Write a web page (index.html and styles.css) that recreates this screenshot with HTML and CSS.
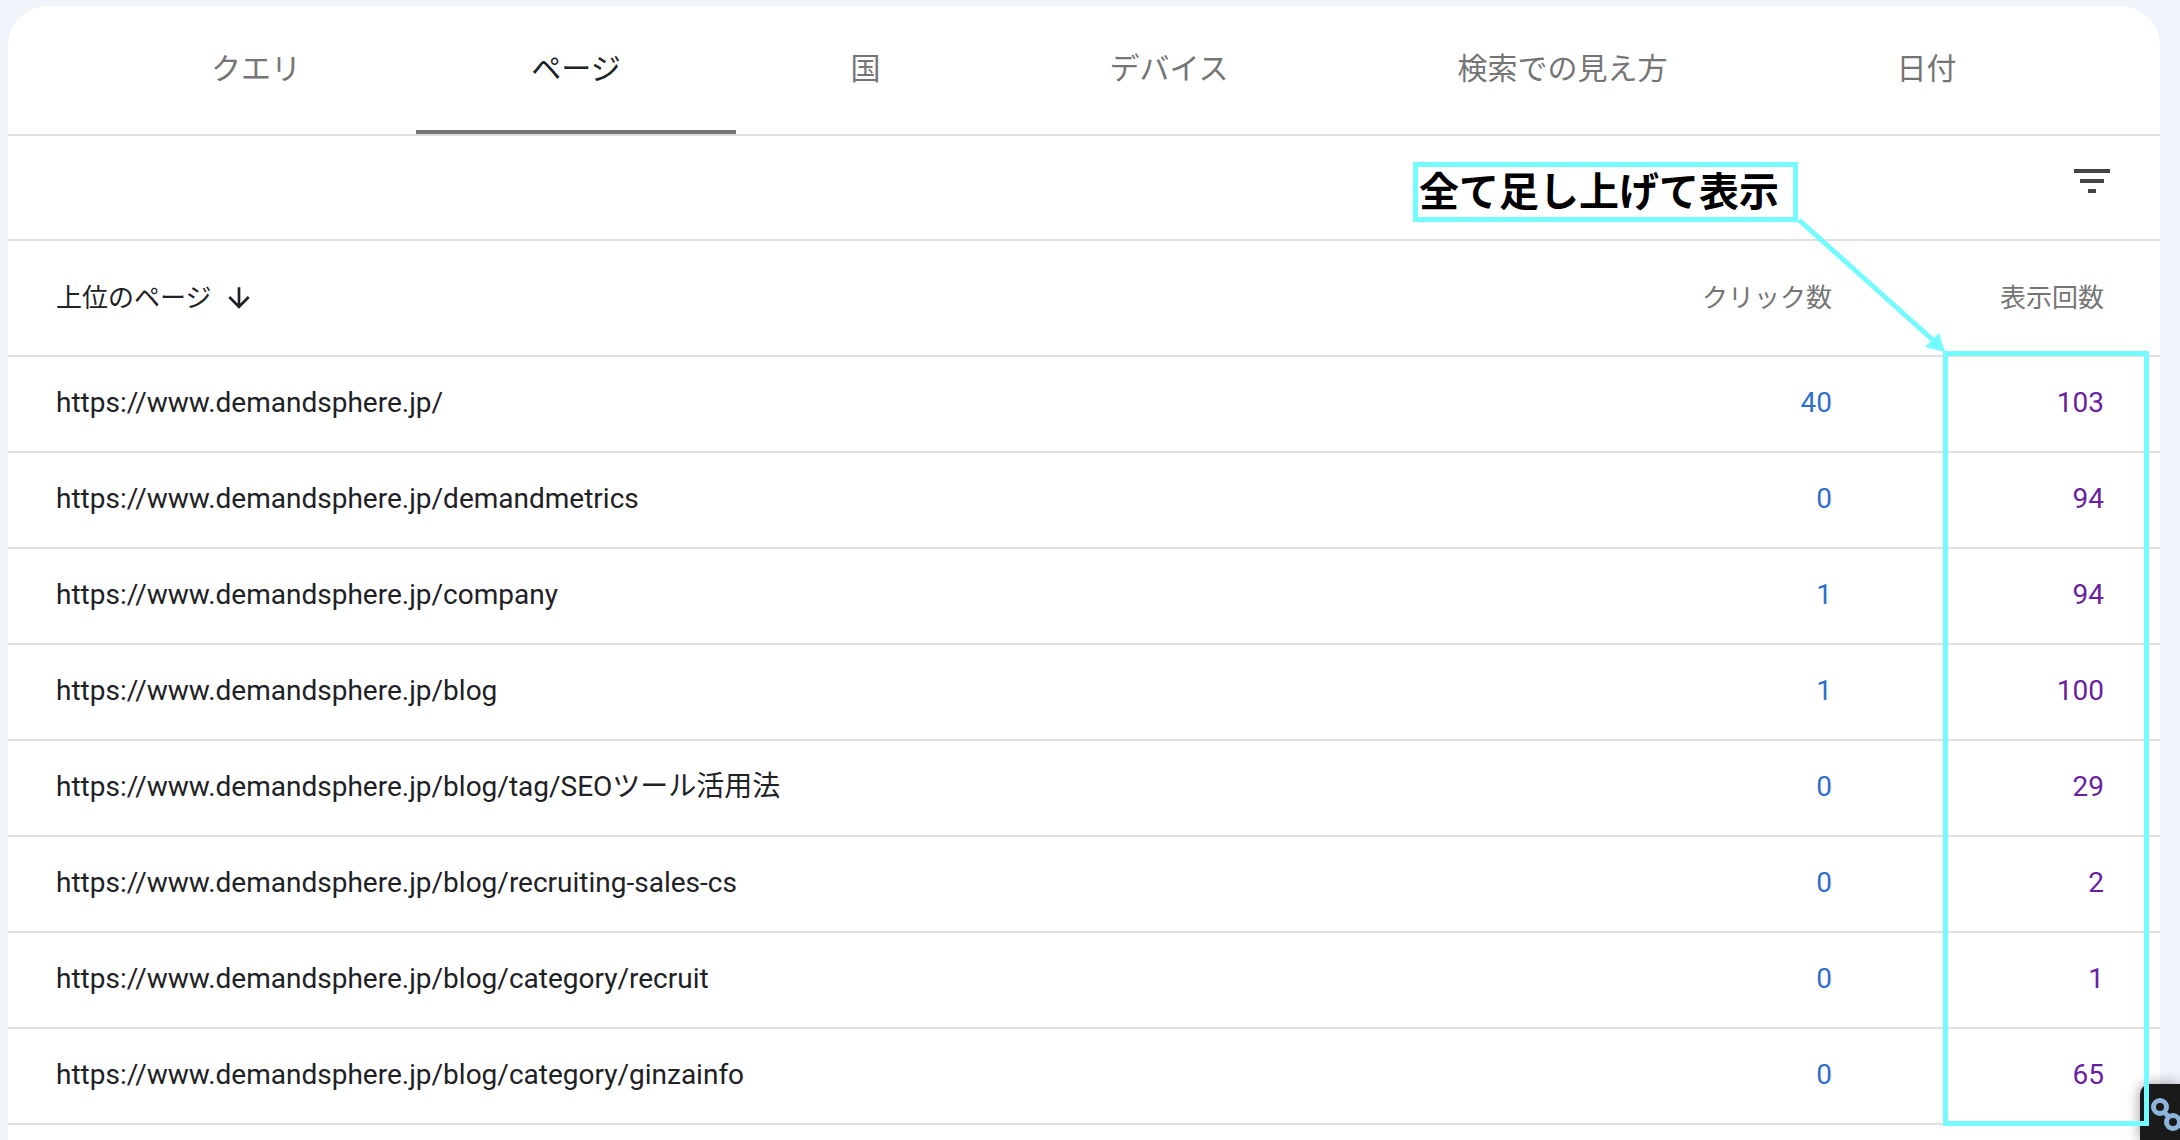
FILE: index.html
```html
<!DOCTYPE html>
<html lang="ja">
<head>
    <meta charset="UTF-8">
    <title>検索パフォーマンス</title>
    <link rel="stylesheet" href="styles.css">
</head>
<body>

<div class="card">
    <!-- Tabs -->
    <div class="tabs">
        <div class="tab tab-fixed">クエリ</div>
        <div class="tab tab-fixed active">ページ</div>
        <div class="tab">国</div>
        <div class="tab">デバイス</div>
        <div class="tab">検索での見え方</div>
        <div class="tab">日付</div>
    </div>

    <!-- Filter toolbar -->
    <div class="toolbar">
        <svg class="filter-icon" viewBox="0 0 24 24"><path d="M10 18h4v-2h-4v2zM3 6v2h18V6H3zm3 7h12v-2H6v2z"/></svg>
    </div>

    <!-- Table -->
    <div class="row head">
        <div class="cell-name">上位のページ
            <svg class="sort-icon" viewBox="0 0 24 24"><path d="M20 12l-1.41-1.41L13 16.17V4h-2v12.17l-5.58-5.59L4 12l8 8 8-8z"/></svg>
        </div>
        <div class="cell-num">クリック数</div>
        <div class="cell-num">表示回数</div>
    </div>
    <div class="row">
        <div class="cell-name">https://www.demandsphere.jp/</div>
        <div class="cell-num clicks">40</div>
        <div class="cell-num views">103</div>
    </div>
    <div class="row">
        <div class="cell-name">https://www.demandsphere.jp/demandmetrics</div>
        <div class="cell-num clicks">0</div>
        <div class="cell-num views">94</div>
    </div>
    <div class="row">
        <div class="cell-name">https://www.demandsphere.jp/company</div>
        <div class="cell-num clicks">1</div>
        <div class="cell-num views">94</div>
    </div>
    <div class="row">
        <div class="cell-name">https://www.demandsphere.jp/blog</div>
        <div class="cell-num clicks">1</div>
        <div class="cell-num views">100</div>
    </div>
    <div class="row">
        <div class="cell-name">https://www.demandsphere.jp/blog/tag/SEOツール活用法</div>
        <div class="cell-num clicks">0</div>
        <div class="cell-num views">29</div>
    </div>
    <div class="row">
        <div class="cell-name">https://www.demandsphere.jp/blog/recruiting-sales-cs</div>
        <div class="cell-num clicks">0</div>
        <div class="cell-num views">2</div>
    </div>
    <div class="row">
        <div class="cell-name">https://www.demandsphere.jp/blog/category/recruit</div>
        <div class="cell-num clicks">0</div>
        <div class="cell-num views">1</div>
    </div>
    <div class="row">
        <div class="cell-name">https://www.demandsphere.jp/blog/category/ginzainfo</div>
        <div class="cell-num clicks">0</div>
        <div class="cell-num views">65</div>
    </div>
</div>

<!-- Floating widget, bottom right -->
<div class="widget">
    <svg class="chain-icon" viewBox="0 0 40 56">
        <g fill="none" stroke="#8fb4da" stroke-width="5">
            <circle cx="20" cy="23" r="6.5"/>
            <circle cx="33" cy="38" r="6.5"/>
            <path d="M24 28l5 5"/>
        </g>
    </svg>
</div>

<!-- Annotation drawn over the screenshot -->
<div class="callout">全て足し上げて表示</div>
<div class="highlight"></div>
<svg class="arrow" viewBox="0 0 2180 1140">
    <line x1="1799" y1="220" x2="1934" y2="341" stroke="#73fbff" stroke-width="5"/>
    <polygon points="1945,352 1939,333 1925,347" fill="#73fbff"/>
</svg>

</body>
</html>
```

FILE: styles.css
```css
/* Global Styles */
body {
    margin: 0;
    height: 1140px;
    overflow: hidden;
    background-color: #f1f5fb;
    font-family: Roboto, "Noto Sans CJK JP", sans-serif;
    color: #202124;
}
.card {
    margin: 6px 20px 0 8px;
    height: 1134px;
    background-color: #fff;
    border-radius: 40px 40px 0 0;
}
/* Tabs */
.tabs {
    display: flex;
    height: 128px;
    padding-left: 88px;
    border-bottom: 2px solid #e0e0e0;
}
.tab {
    height: 124px;
    padding: 0 114.5px;
    line-height: 126px;
    font-size: 30px;
    color: #757575;
    border-bottom: 4px solid transparent;
}
.tab-fixed {
    width: 320px;
    padding: 0;
    text-align: center;
}
.tab.active {
    color: #202124;
    border-bottom-color: #757575;
}
/* Toolbar */
.toolbar {
    display: flex;
    justify-content: flex-end;
    height: 103px;
    padding-right: 44px;
    border-bottom: 2px solid #e0e0e0;
}
.filter-icon {
    width: 48px;
    height: 48px;
    margin-top: 21px;
    fill: #444;
}
/* Table rows */
.row {
    display: grid;
    grid-template-columns: 1fr 200px 272px;
    align-items: center;
    height: 92px;
    padding: 0 56px 2px 48px;
    font-size: 28px;
    line-height: 32px;
    border-bottom: 2px solid #e0e0e0;
}
.row.head {
    height: 114px;
    padding-bottom: 0;
    font-size: 26px;
    color: #757575;
}
.head .cell-name {
    display: flex;
    align-items: center;
    gap: 12px;
    color: #202124;
}
.sort-icon {
    width: 32px;
    height: 32px;
    fill: #202124;
}
.cell-num {
    text-align: right;
}
.clicks {
    color: #2f6fca;
}
.views {
    color: #6a1fa3;
}
/* Widget */
.widget {
    position: absolute;
    left: 2140px;
    top: 1084px;
    width: 40px;
    height: 56px;
    background-color: #1a1a1a;
    border-radius: 10px 0 0 0;
    box-shadow: 0 0 14px rgba(0, 0, 0, 0.4);
}
.chain-icon {
    display: block;
    width: 40px;
    height: 56px;
    filter: blur(0.6px);
}
/* Annotation */
.callout {
    position: absolute;
    left: 1413px;
    top: 162px;
    width: 374px;
    height: 50px;
    padding-left: 1px;
    border: 5px solid #73fbff;
    background-color: #fff;
    font-size: 40px;
    font-weight: 700;
    line-height: 52px;
    color: #000;
    white-space: nowrap;
}
.highlight {
    position: absolute;
    left: 1943px;
    top: 351px;
    width: 196px;
    height: 765px;
    border: 5px solid #73fbff;
}
.arrow {
    position: absolute;
    left: 0;
    top: 0;
    width: 2180px;
    height: 1140px;
}
```
